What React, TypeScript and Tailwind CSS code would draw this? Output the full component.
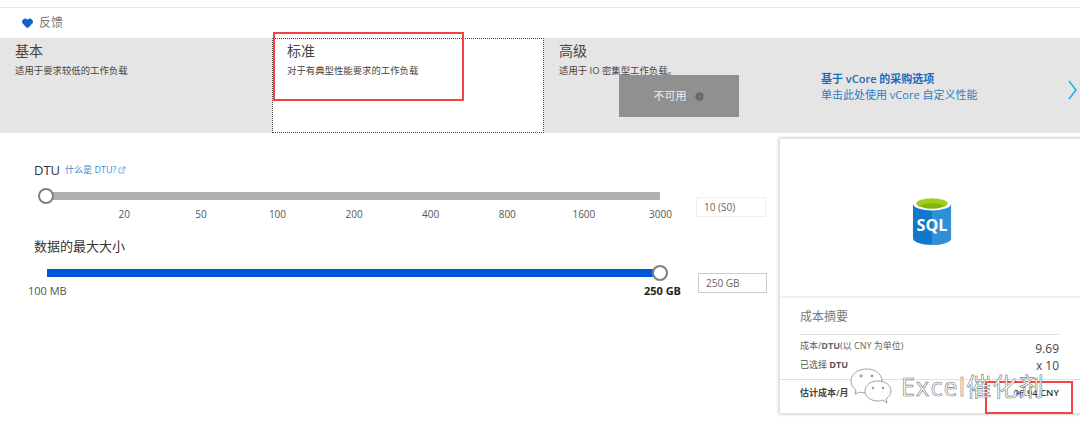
import { Heart, ExternalLink, Info } from 'lucide-react';

const ticks = ['20', '50', '100', '200', '400', '800', '1600', '3000'];

function SqlIcon() {
  return (
    <svg width="40" height="50" viewBox="0 0 42 52">
      <path d="M1 8v36c0 4 9 7 20 7s20-3 20-7V8z" fill="#0f78c8" />
      <path d="M21 8h20v36c0 4-9 7-20 7z" fill="#2f8fd8" />
      <ellipse cx="21" cy="8" rx="20" ry="7" fill="#fff" />
      <ellipse cx="21" cy="7.5" rx="16.5" ry="5.5" fill="#a4cc1c" />
      <path d="M8 10c3-2 8-2.5 13-2.5S31 8 34 10c-3 2-8 3-13 3S11 12 8 10z" fill="#7db512" />
      <text x="21" y="37" textAnchor="middle" fontSize="17" fontWeight="700" fill="#fff" fontFamily="'Open Sans', sans-serif">SQL</text>
    </svg>
  );
}

function Watermark() {
  return (
    <div className="absolute left-[850px] top-[368px] flex items-center gap-[9px]">
      <svg width="42" height="36" viewBox="0 0 42 36" fill="#ffffff" stroke="#8a8a8a" strokeWidth="0.8">
        <path d="M17 1C8 1 1 6 1 13c0 4 2 7 5 9l-1 4 5-2c2 .6 4 1 7 1 8 0 15-5 15-12S25 1 17 1z" />
        <path d="M28 13c-7 0-13 4-13 10s6 10 13 10c2 0 3 0 5-1l4 3-1-4c3-2 5-5 5-8 0-6-6-10-13-10z" />
        <circle cx="11" cy="8" r="1.4" fill="#999" stroke="none" />
        <circle cx="22" cy="8" r="1.4" fill="#999" stroke="none" />
        <circle cx="23" cy="20" r="1.2" fill="#999" stroke="none" />
        <circle cx="33" cy="20" r="1.2" fill="#999" stroke="none" />
      </svg>
      <span className="text-[25px] leading-none tracking-[1.2px] text-white [-webkit-text-stroke:0.6px_#7a7a7a]">Excel催化剂</span>
    </div>
  );
}

export default function App() {
  return (
    <div className="relative h-[435px] w-[1080px] overflow-hidden bg-white font-['Open_Sans','Noto_Sans_CJK_SC',sans-serif] text-[#333]">
      <div className="mt-[7px] h-[1px] bg-[#e6e6e6]" />

      <div className="flex h-[30px] items-center gap-[5px] pl-[21px]">
        <Heart className="h-[12px] w-[13px] fill-[#0f5fd0] text-[#0f5fd0]" />
        <span className="text-[12px] text-[#777]">反馈</span>
      </div>

      <div className="flex h-[95px] bg-[#e5e5e5]">
        <div className="w-[272px] pl-[15px] pt-[3px]">
          <div className="text-[14px] leading-[20px] text-[#444]">基本</div>
          <div className="mt-[3px] text-[9.4px] leading-[13px] text-[#444]">适用于要求较低的工作负载</div>
        </div>
        <div className="w-[272px] border border-dotted border-[#444] bg-white pl-[14px] pt-[2px]">
          <div className="text-[14px] leading-[20px] text-[#444]">标准</div>
          <div className="mt-[3px] text-[9.4px] leading-[13px] text-[#444]">对于有典型性能要求的工作负载</div>
        </div>
        <div className="relative w-[277px] pl-[15px] pt-[3px]">
          <div className="text-[14px] leading-[20px] text-[#444]">高级</div>
          <div className="mt-[3px] text-[9.4px] leading-[13px] text-[#444]">适用于 IO 密集型工作负载。</div>
          <div className="absolute left-[75px] top-[37px] flex h-[42px] w-[120px] items-center justify-center gap-[7px] bg-[#909090]">
            <span className="text-[11px] text-[#eee]">不可用</span>
            <Info className="h-[11px] w-[11px] fill-[#666] text-[#909090]" />
          </div>
        </div>
        <div className="pt-[33px]">
          <div className="text-[11px] font-semibold leading-[16px] text-[#1a6bb8]">基于 vCore 的采购选项</div>
          <div className="text-[11px] leading-[16px] text-[#2a80c8]">单击此处使用 vCore 自定义性能</div>
        </div>
        <svg className="ml-[91px] mt-[42px]" width="9" height="20" viewBox="0 0 9 20" fill="none" stroke="#1cb0ee" strokeWidth="1.6">
          <path d="M1 1l7 9-7 9" />
        </svg>
      </div>

      <div className="flex">
        <div className="w-[779px] shrink-0">
          <div className="mt-[28px] flex items-center pl-[34px]">
            <span className="text-[13px] leading-[18px]">DTU</span>
            <span className="ml-[5px] text-[9px] text-[#3a8ae0]">什么是 DTU?</span>
            <ExternalLink className="ml-[2px] h-[8px] w-[8px] text-[#3a8ae0]" />
          </div>

          <div className="flex items-start">
            <div className="relative ml-[46px] mt-[13px] h-[8px] w-[614px] bg-[#b0b0b0]">
              <div className="absolute left-[-8px] top-[-4px] h-[16px] w-[16px] rounded-full border-2 border-[#808080] bg-white" />
            </div>
            <div className="ml-[36px] mt-[18px] flex h-[20px] w-[70px] items-center border border-[#eeeeee] pl-[7px] text-[10px] text-[#666]">10 (S0)</div>
          </div>

          <div className="ml-[86px] mt-[-10px] flex">
            {ticks.map((t) => (
              <div key={t} className="w-[76.6px] text-center text-[10px] leading-[14px] text-[#555]">{t}</div>
            ))}
          </div>

          <div className="mt-[16px] pl-[34px] text-[13px] leading-[18px]">数据的最大大小</div>

          <div className="flex items-start">
            <div className="relative ml-[47px] mt-[14px] h-[8px] w-[613px] bg-[#0058d8]">
              <div className="absolute right-[-8px] top-[-4px] h-[16px] w-[16px] rounded-full border-2 border-[#808080] bg-white" />
            </div>
            <div className="ml-[38px] mt-[18px] flex h-[20px] w-[69px] items-center border border-[#cccccc] pl-[7px] text-[10px] text-[#666]">250 GB</div>
          </div>

          <div className="mt-[-9px] flex w-[681px] justify-between pl-[28px] text-[11px] leading-[14px]">
            <span className="text-[#555]">100 MB</span>
            <span className="font-bold text-[#222]">250 GB</span>
          </div>
        </div>

        <div className="mt-[5px] h-[276px] w-[305px] shrink-0 border border-[#e2e2e2] bg-white shadow-[0_0_3px_rgba(0,0,0,0.3)]">
          <div className="flex h-[157px] items-center justify-center pt-[6px]">
            <SqlIcon />
          </div>
          <div className="border-t-2 border-[#f0f0f0] px-[20px] pt-[11px]">
            <div className="w-[259px] border-b border-[#e0e0e0] pb-[9px] text-[12px] leading-[16px] text-[#777]">成本摘要</div>
            <div className="mt-[3px] flex w-[259px] items-start justify-between">
              <span className="text-[9px] leading-[16px] text-[#666]">成本/<b>DTU</b>(以 CNY 为单位)</span>
              <span className="mt-[3px] text-[12px] leading-[16px] text-[#444]">9.69</span>
            </div>
            <div className="flex w-[259px] items-start justify-between">
              <span className="text-[9px] leading-[16px] text-[#555]">已选择 <b>DTU</b></span>
              <span className="mt-[1px] text-[12px] leading-[16px] text-[#444]">x 10</span>
            </div>
          </div>
          <div className="mt-[5px] flex justify-between border-t border-[#e0e0e0] pl-[20px] pt-[6px]">
            <span className="text-[9px] font-semibold text-[#444]">估计成本/月</span>
            <span className="mr-[24px] text-[9.4px] font-semibold text-[#333]">96.94 CNY</span>
          </div>
        </div>
      </div>

      <div className="absolute left-[273px] top-[32px] h-[69px] w-[191px] border-2 border-[#f24444]" />
      <div className="absolute left-[985px] top-[381px] h-[33px] w-[88px] border-2 border-[#f24444]" />
      <Watermark />
    </div>
  );
}
